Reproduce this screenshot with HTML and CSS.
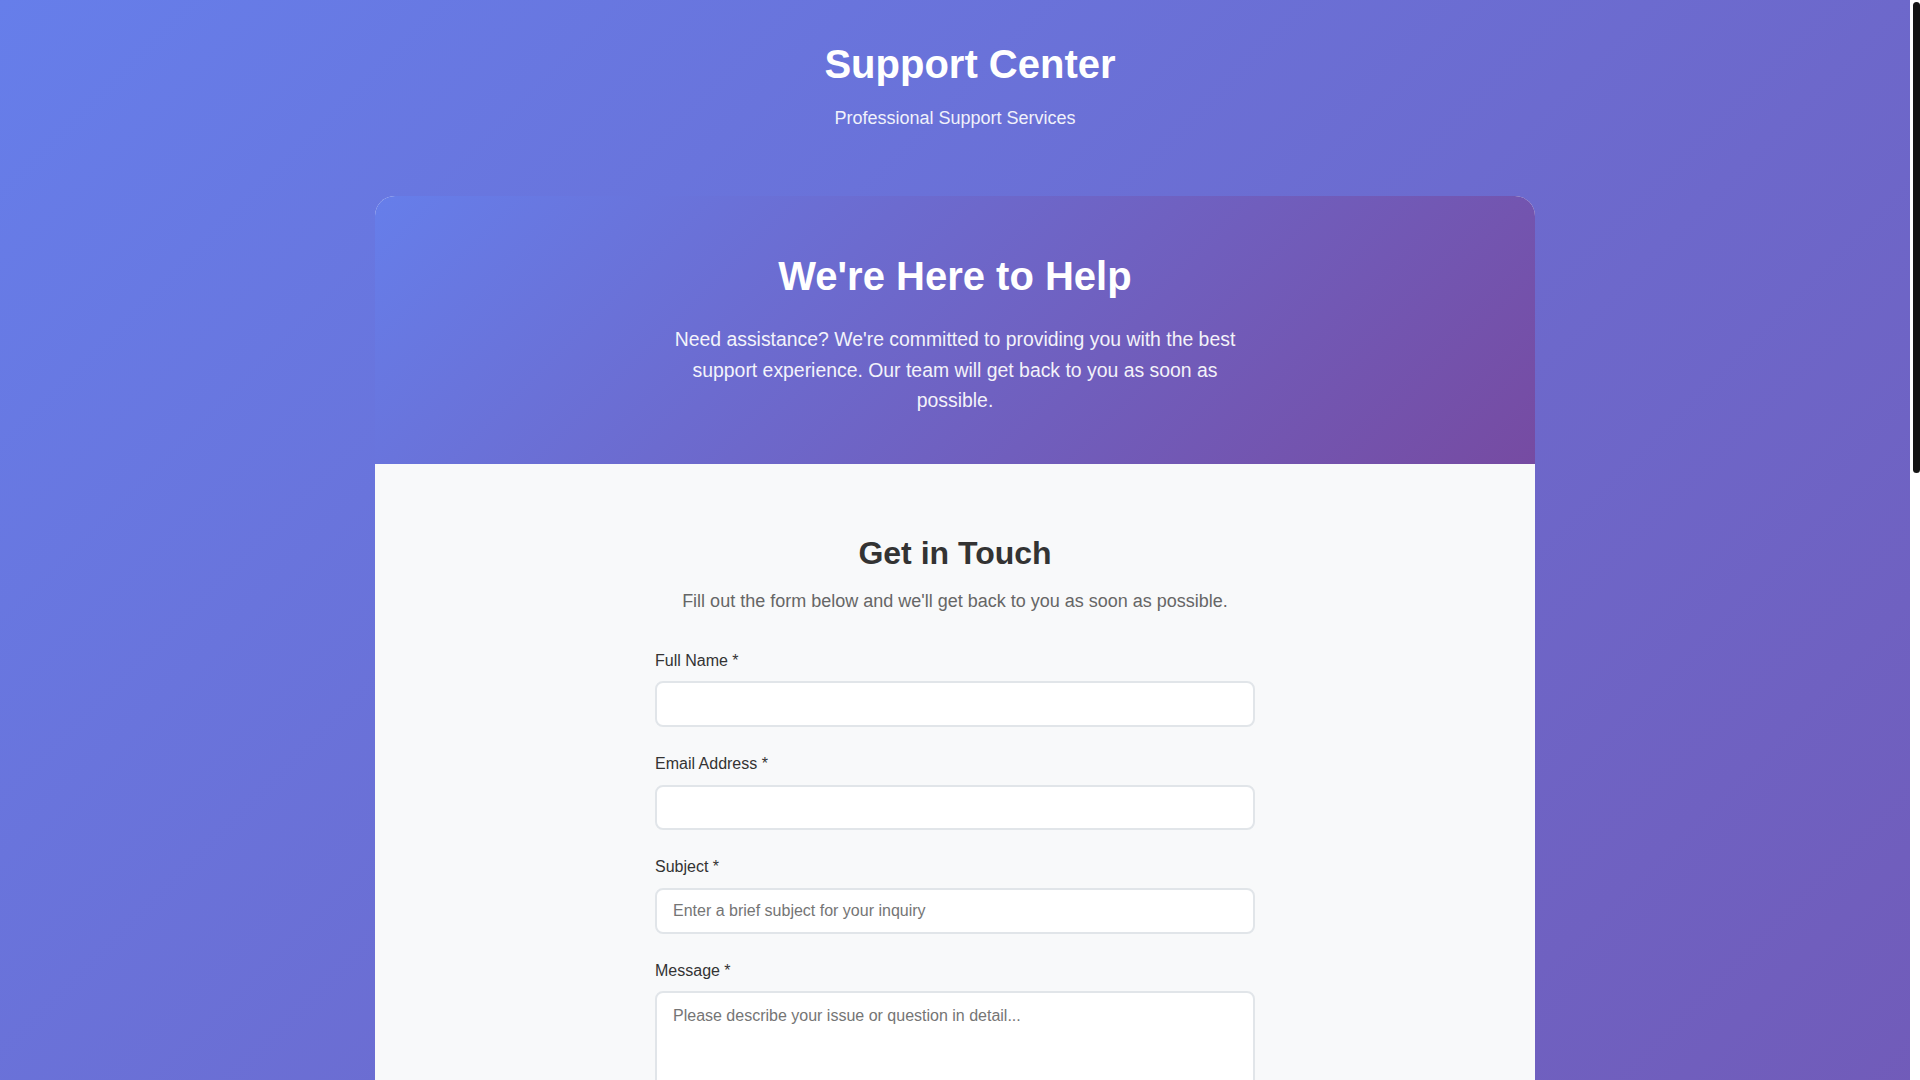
FILE: index.html
```html
<!DOCTYPE html>
<html lang="en">
<head>
<meta charset="UTF-8">
<title>Support Center</title>
<link rel="stylesheet" href="styles.css">
</head>
<body>
<div class="page">
<div class="container">
  <header class="site-header">
    <h1 class="site-title">Support Center</h1>
    <p class="site-tagline">Professional Support Services</p>
  </header>

  <main class="card">
    <section class="hero">
      <h2 class="hero-title">We're Here to Help</h2>
      <p class="hero-text">Need assistance? We're committed to providing you with the best support experience. Our team will get back to you as soon as possible.</p>
    </section>

    <section class="form-section">
      <div class="form-wrap">
        <h2 class="section-title">Get in Touch</h2>
        <p class="section-lead">Fill out the form below and we'll get back to you as soon as possible.</p>
        <form class="contact-form">
          <div class="field">
            <label class="field-label" for="name">Full Name *</label>
            <input class="field-input" id="name" type="text">
          </div>
          <div class="field">
            <label class="field-label" for="email">Email Address *</label>
            <input class="field-input" id="email" type="email">
          </div>
          <div class="field">
            <label class="field-label" for="subject">Subject *</label>
            <input class="field-input" id="subject" type="text" placeholder="Enter a brief subject for your inquiry">
          </div>
          <div class="field">
            <label class="field-label" for="message">Message *</label>
            <textarea class="field-input field-textarea" id="message" placeholder="Please describe your issue or question in detail..."></textarea>
          </div>
          <button class="submit-btn" type="button">Send Message</button>
        </form>
      </div>
    </section>

    <section class="info-section">
      <h2 class="section-title">Other Ways to Reach Us</h2>
      <p class="section-lead">Choose the channel that works best for you.</p>
      <div class="info-grid">
        <div class="info-card">
          <h3 class="info-title">Email</h3>
          <p class="info-text">support@example.com</p>
        </div>
        <div class="info-card">
          <h3 class="info-title">Phone</h3>
          <p class="info-text">+1 (555) 123-4567</p>
        </div>
        <div class="info-card">
          <h3 class="info-title">Hours</h3>
          <p class="info-text">Mon – Fri, 9:00 AM – 6:00 PM</p>
        </div>
      </div>
    </section>

    <section class="faq-section">
      <h2 class="section-title">Frequently Asked Questions</h2>
      <div class="faq-list">
        <div class="faq-item">
          <h3 class="faq-q">How quickly will I receive a response?</h3>
          <p class="faq-a">Our team typically responds within 24 hours on business days.</p>
        </div>
        <div class="faq-item">
          <h3 class="faq-q">Can I track the status of my request?</h3>
          <p class="faq-a">Yes, you will receive a confirmation email with a reference number.</p>
        </div>
        <div class="faq-item">
          <h3 class="faq-q">What information should I include?</h3>
          <p class="faq-a">Please include as much detail as possible so we can help you faster.</p>
        </div>
        <div class="faq-item">
          <h3 class="faq-q">Do you offer support on weekends?</h3>
          <p class="faq-a">Urgent requests are monitored on weekends and handled as quickly as possible.</p>
        </div>
      </div>
    </section>
  </main>

  <footer class="site-footer">
    <p>&copy; 2024 Support Center. All rights reserved.</p>
  </footer>
</div>
</div>
<div class="scrollbar" aria-hidden="true"><div class="scrollbar-thumb"></div></div>
</body>
</html>
```

FILE: styles.css
```css
* {
  box-sizing: border-box;
}

html, body {
  margin: 0;
  padding: 0;
}

body {
  font-family: "Liberation Sans", Arial, sans-serif;
  line-height: 1.6;
  color: #333;
  background: #fff;
}

.page {
  margin-right: 10px;
  min-height: 100vh;
  background: linear-gradient(135deg, #667eea 0%, #764ba2 100%);
}

/* scrollbar indicator drawn over the right edge */
.scrollbar {
  position: fixed;
  top: 0;
  right: 0;
  width: 10px;
  height: 100vh;
  background: #fff;
}

.scrollbar-thumb {
  position: absolute;
  top: 2px;
  right: 0;
  width: 7px;
  height: 471px;
  background: #141414;
  border-radius: 4px;
}

.container {
  max-width: 1200px;
  margin: 0 auto;
  padding: 0 20px;
}

.site-header {
  text-align: center;
  color: #fff;
  padding: 32px 0;
}

.site-title {
  font-size: 40px;
  font-weight: 700;
  margin: 0 0 8px;
  padding-left: 30px;
}

.site-tagline {
  font-size: 18px;
  margin: 0;
  opacity: 0.9;
}

.card {
  display: block;
  margin-top: 31px;
  background: #f8f9fa;
  border-radius: 20px;
  overflow: hidden;
}

.hero {
  background: linear-gradient(135deg, #667eea 0%, #764ba2 100%);
  color: #fff;
  text-align: center;
  padding: 48px 32px;
}

.hero-title {
  font-size: 40px;
  font-weight: 700;
  margin: 0 0 16px;
}

.hero-text {
  font-size: 19.4px;
  line-height: 30.7px;
  max-width: 600px;
  margin: 0 auto;
  opacity: 0.92;
}

.form-section {
  padding: 64px 32px;
}

.form-wrap {
  max-width: 600px;
  margin: 0 auto;
}

.section-title {
  font-size: 32px;
  font-weight: 700;
  color: #333;
  text-align: center;
  margin: 0 0 8px;
}

.section-lead {
  font-size: 18px;
  color: #666;
  text-align: center;
  margin: 0 0 32px;
}

.field {
  margin-bottom: 24px;
}

.field-label {
  display: block;
  margin-bottom: 8px;
  font-size: 16px;
  font-weight: 500;
  color: #333;
}

.field-input {
  display: block;
  width: 100%;
  height: 45.7px;
  padding: 12px 16px;
  border: 2px solid #e1e5e9;
  border-radius: 8px;
  background: #fff;
  font-family: inherit;
  font-size: 16px;
  color: #333;
}

.field-input::placeholder {
  color: #757575;
}

.field-textarea {
  height: auto;
  min-height: 150px;
  resize: vertical;
  line-height: 1.6;
  padding-top: 10px;
}

.submit-btn {
  display: block;
  width: 100%;
  padding: 15px 30px;
  border: none;
  border-radius: 8px;
  background: linear-gradient(135deg, #667eea 0%, #764ba2 100%);
  color: #fff;
  font-family: inherit;
  font-size: 17.6px;
  font-weight: 600;
  cursor: pointer;
}

.info-section {
  padding: 64px 32px;
  background: #fff;
}

.info-grid {
  display: grid;
  grid-template-columns: repeat(3, 1fr);
  gap: 24px;
}

.info-card {
  background: #f8f9fa;
  border-radius: 12px;
  padding: 40px 24px;
  text-align: center;
}

.info-title {
  font-size: 20px;
  margin: 0 0 8px;
  color: #333;
}

.info-text {
  margin: 0;
  color: #666;
}

.faq-section {
  padding: 64px 32px;
}

.faq-list {
  max-width: 800px;
  margin: 32px auto 0;
  display: flex;
  flex-direction: column;
  gap: 16px;
}

.faq-item {
  background: #fff;
  border-radius: 12px;
  padding: 24px;
  border-left: 4px solid #667eea;
}

.faq-q {
  font-size: 18px;
  margin: 0 0 8px;
  color: #333;
}

.faq-a {
  margin: 0;
  color: #666;
}

.site-footer {
  text-align: center;
  color: rgba(255, 255, 255, 0.85);
  padding: 48px 0;
}

.site-footer p {
  margin: 0;
}
```
